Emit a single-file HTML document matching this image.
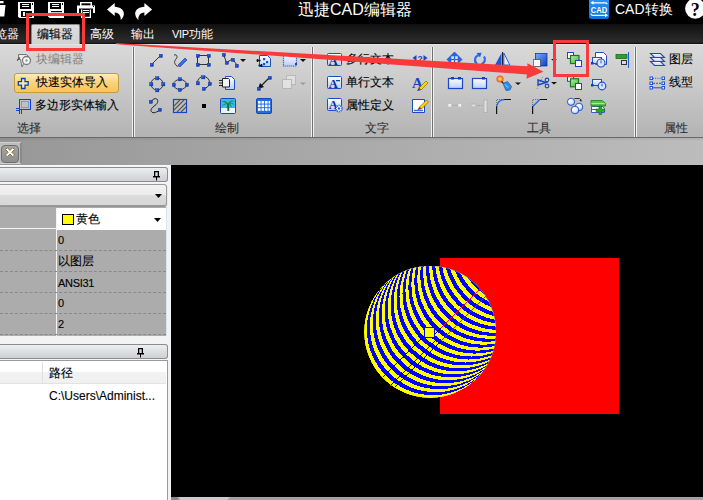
<!DOCTYPE html>
<html><head><meta charset="utf-8">
<style>
*{margin:0;padding:0;box-sizing:border-box}
html,body{width:703px;height:500px;overflow:hidden;background:#000;font-family:"Liberation Sans",sans-serif}
.a{position:absolute}
.t{position:absolute;white-space:nowrap;font-size:12px;line-height:14px}
#title{left:0;top:0;width:703px;height:24px;background:#000}
#tabs{left:0;top:24px;width:703px;height:20px;background:linear-gradient(#101010,#2c2c2c 90%,#0a0a0a)}
#ribbon{left:0;top:44px;width:703px;height:94px;background:linear-gradient(#d9d9d9 0%,#cdcdcd 35%,#b3b3b3 100%);border-top:1px solid #e4e4e4;border-bottom:1px solid #6a6a6a}
.sep{position:absolute;top:47px;width:3px;height:90px;background:linear-gradient(90deg,#f0f0f0 0,#f0f0f0 1px,#707070 1px,#707070 2px,#f0f0f0 2px)}
#strip{left:0;top:138px;width:703px;height:27px;background:linear-gradient(rgba(0,0,0,0.08),rgba(0,0,0,0) 3px),linear-gradient(90deg,#979797 0,#999 30px,#bbbbbb 680px,#bcbcbc 703px)}
#panel{left:0;top:165px;width:171px;height:335px;background:#f3f3f3;border-top:1px solid #fafafa}
#canvas{left:171px;top:165px;width:532px;height:332px;background:#000}
#bottom{left:171px;top:497px;width:532px;height:3px;background:#a2a2a2}
.lbl{color:#2e2e2e;-webkit-text-stroke:0.1px #2e2e2e}
.dk{color:#000;-webkit-text-stroke:0.12px #000}
.hdr{position:absolute;left:0;width:168px;height:15px;border:1px solid #8c8c8c;border-left:none;border-radius:0 3px 3px 0;background:linear-gradient(#eceef0,#cdd0d4)}
</style></head><body>
<div id="title" class="a"></div>
<div id="tabs" class="a"></div>
<div id="ribbon" class="a"></div>
<div class="sep" style="left:132px"></div>
<div class="sep" style="left:311px"></div>
<div class="sep" style="left:431px"></div>
<div class="sep" style="left:634px"></div>
<div id="strip" class="a"></div>
<div id="panel" class="a"></div>
<div id="canvas" class="a"></div>
<div id="bottom" class="a"></div>
<div class="a" style="left:178px;top:497px;width:52px;height:3px;background:#cacaca;clip-path:polygon(0 0,100% 0,95% 100%,5% 100%)"></div>
<div class="a" style="left:171px;top:497px;width:7px;height:3px;background:#8a8a8a"></div>

<!-- strip tab -->
<div class="a" style="left:0;top:142px;width:22px;height:22px;background:#bdbdbd;border:1px solid #cfcfcf;border-left:none;border-right:2px solid #8a8a8a"></div>
<div class="a" style="left:1px;top:145px;width:18px;height:18px;border-radius:4px;background:linear-gradient(#a4a4a4,#8e8e8e);border:1px solid #6e6e6e"></div>

<!-- title text -->
<div class="t" style="left:298px;top:0px;font-size:16px;line-height:20px;color:#fff">迅捷CAD编辑器</div>
<div class="t" style="left:615px;top:1px;font-size:14px;line-height:16px;color:#fff">CAD转换</div>

<!-- tabs -->
<div class="t" style="left:-17px;top:27px;color:#fff">浏览器</div>
<div class="a" style="left:31px;top:24px;width:49px;height:20px;background:linear-gradient(#dedede,#d2d2d2);border:1px solid #8a8a8a;border-bottom:none;border-radius:2px 2px 0 0"></div>
<div class="t dk" style="left:37px;top:27px">编辑器</div>
<div class="t" style="left:90px;top:27px;color:#fff">高级</div>
<div class="t" style="left:131px;top:27px;color:#fff">输出</div>
<div class="t" style="left:172px;top:27px;color:#fff"><span style="font-size:11px;letter-spacing:-0.3px">VIP</span>功能</div>

<!-- ribbon texts -->
<div class="t" style="left:36px;top:52px;color:#7e7e7e">块编辑器</div>
<div class="a" style="left:14px;top:73px;width:105px;height:20px;border:1px solid #c89a40;border-radius:3px;background:linear-gradient(#fdecb4,#f9d27a 50%,#f6c659)"></div>
<div class="t dk" style="left:36px;top:75px">快速实体导入</div>
<div class="t dk" style="left:35px;top:98px">多边形实体输入</div>
<div class="t lbl" style="left:17px;top:121px">选择</div>
<div class="t lbl" style="left:215px;top:121px">绘制</div>
<div class="t dk" style="left:346px;top:52px">多行文本</div>
<div class="t dk" style="left:346px;top:75px">单行文本</div>
<div class="t dk" style="left:346px;top:98px">属性定义</div>
<div class="t lbl" style="left:365px;top:121px">文字</div>
<div class="t lbl" style="left:527px;top:121px">工具</div>
<div class="t dk" style="left:669px;top:52px">图层</div>
<div class="t dk" style="left:669px;top:75px">线型</div>
<div class="t lbl" style="left:664px;top:121px">属性</div>

<!-- panel -->
<div class="hdr" style="top:167px"></div>
<div class="a" style="left:0;top:184px;width:167px;height:22px;border:1px solid #9a9a9a;border-left:none;border-radius:0 3px 3px 0;background:linear-gradient(#f2f2f2 0%,#ececec 50%,#dcdcdc 51%,#d6d6d6);box-shadow:0 1px 1px #888"></div>
<div class="a" style="left:0;top:207px;width:167px;height:129px;background:#acacac;border-right:1px solid #dde3ea"></div>
<div class="a" style="left:57px;top:208px;width:109px;height:22px;background:#fff"></div>
<div class="a" style="left:56px;top:208px;width:1px;height:128px;background:#f4f4f4"></div>
<div class="a" style="left:0;top:228px;width:56px;height:1px;background:#f4f4f4"></div>
<div class="a" style="left:0;top:250px;width:166px;border-top:1px dashed #8a8a8a"></div>
<div class="a" style="left:0;top:271px;width:166px;border-top:1px dashed #8a8a8a"></div>
<div class="a" style="left:0;top:292px;width:166px;border-top:1px dashed #8a8a8a"></div>
<div class="a" style="left:0;top:313px;width:166px;border-top:1px dashed #8a8a8a"></div>
<div class="a" style="left:0;top:334px;width:166px;border-top:1px dashed #8a8a8a"></div>
<div class="a" style="left:62px;top:214px;width:12px;height:11px;background:#ff0;border:1px solid #000"></div>
<div class="t dk" style="left:76px;top:212px">黄色</div>
<div class="t dk" style="left:58px;top:233px;font-size:11px">0</div>
<div class="t dk" style="left:58px;top:254px">以图层</div>
<div class="t dk" style="left:58px;top:276px;font-size:11px;letter-spacing:-0.3px">ANSI31</div>
<div class="t dk" style="left:58px;top:296px;font-size:11px">0</div>
<div class="t dk" style="left:58px;top:317px;font-size:11px">2</div>

<div class="hdr" style="top:344px"></div>
<div class="a" style="left:0;top:360px;width:168px;height:140px;background:#fff;border:1px solid #9a9a9a;border-left:none;border-bottom:none"></div>
<div class="a" style="left:0;top:361px;width:166px;height:23px;background:linear-gradient(#fff 0%,#fff 50%,#f2f2f2 51%,#f0f0f0);border-bottom:1px solid #e2e2e2"></div>
<div class="a" style="left:42px;top:362px;width:1px;height:21px;background:#e0e0e0"></div>
<div class="t dk" style="left:49px;top:366px">路径</div>
<div class="t dk" style="left:49px;top:389px">C:\Users\Administ...</div>

<svg class="a" style="left:0;top:136px" width="171" height="250">
<!-- close X -->
<path d="M5.5 13.5l1.8-1.8 2.7 2.7 2.7-2.7 1.8 1.8-2.7 2.7 2.7 2.7-1.8 1.8-2.7-2.7-2.7 2.7-1.8-1.8 2.7-2.7z" fill="#fff" stroke="#7d6f2a" stroke-width="0.9"/>
<!-- pins -->
<g fill="#000">
<path d="M154 35h5v5h1v1.5h-3v3h-1v-3h-3V40h1zM155.3 36.2v3.8h2.4v-3.8z"/>
<path d="M138 212h5v5h1v1.5h-3v3h-1v-3h-3V217h1zM139.3 213.2v3.8h2.4v-3.8z"/>
<path d="M155 58h7l-3.5 4z"/>
<path d="M154 82h7l-3.5 4z"/>
</g>
</svg>
<div class="a" style="left:440px;top:258px;width:179px;height:156px;background:#f00"></div>
<!--HATCH--><svg class="a" style="left:0;top:0" width="703" height="500" shape-rendering="crispEdges"><defs><clipPath id="cc"><circle cx="430" cy="332" r="66"/></clipPath></defs><g clip-path="url(#cc)"><circle cx="430" cy="332" r="66" fill="#ffff00"/><circle cx="432.83" cy="329.17" r="66" fill="#0000ff"/><circle cx="435.80" cy="326.20" r="66" fill="#ffff00"/><circle cx="438.77" cy="323.23" r="66" fill="#0000ff"/><circle cx="441.74" cy="320.26" r="66" fill="#ffff00"/><circle cx="444.71" cy="317.29" r="66" fill="#0000ff"/><circle cx="447.68" cy="314.32" r="66" fill="#ffff00"/><circle cx="450.65" cy="311.35" r="66" fill="#0000ff"/><circle cx="453.62" cy="308.38" r="66" fill="#ffff00"/><circle cx="456.59" cy="305.41" r="66" fill="#0000ff"/><circle cx="459.56" cy="302.44" r="66" fill="#ffff00"/><circle cx="462.53" cy="299.47" r="66" fill="#0000ff"/><circle cx="465.50" cy="296.50" r="66" fill="#ffff00"/><circle cx="468.47" cy="293.53" r="66" fill="#0000ff"/><circle cx="471.44" cy="290.56" r="66" fill="#ffff00"/><circle cx="474.41" cy="287.59" r="66" fill="#0000ff"/><circle cx="477.38" cy="284.62" r="66" fill="#ffff00"/><circle cx="480.35" cy="281.65" r="66" fill="#0000ff"/><circle cx="483.32" cy="278.68" r="66" fill="#ffff00"/><circle cx="486.29" cy="275.71" r="66" fill="#0000ff"/><circle cx="489.26" cy="272.74" r="66" fill="#ffff00"/><circle cx="492.23" cy="269.77" r="66" fill="#0000ff"/><circle cx="495.20" cy="266.80" r="66" fill="#ffff00"/><circle cx="498.17" cy="263.83" r="66" fill="#0000ff"/><circle cx="501.13" cy="260.87" r="66" fill="#ffff00"/><circle cx="504.10" cy="257.90" r="66" fill="#0000ff"/><circle cx="507.07" cy="254.93" r="66" fill="#ffff00"/><circle cx="510.04" cy="251.96" r="66" fill="#0000ff"/><circle cx="513.01" cy="248.99" r="66" fill="#ffff00"/><circle cx="515.98" cy="246.02" r="66" fill="#0000ff"/><circle cx="518.95" cy="243.05" r="66" fill="#ffff00"/><circle cx="521.92" cy="240.08" r="66" fill="#0000ff"/></g></svg><!--/HATCH-->
<svg class="a" style="left:0;top:0" width="703" height="500" shape-rendering="crispEdges"><g stroke-width="1" fill="none">
<path d="M382.5 377.5L425.5 334.5M390.5 385.5L436.5 339.5M394.5 387.5L440.5 341.5M434.5 334.5L440.5 328.5" stroke="#000"/>
<path d="M440.5 328.5L479.5 289.5M440.5 341.5L486.5 295.5" stroke="#f00"/>
</g><rect x="390" y="385" width="1" height="1" fill="#f00"/><rect x="424" y="327" width="11" height="11" fill="#00f"/><rect x="425" y="328" width="9" height="9" fill="#ff0"/></svg>

<svg class="a" style="left:0;top:0" width="703" height="165">
<defs>
<linearGradient id="bsq" x1="0" y1="0" x2="1" y2="1"><stop offset="0" stop-color="#3c7cff"/><stop offset="1" stop-color="#0028a8"/></linearGradient>
<linearGradient id="lbox" x1="0" y1="0" x2="0" y2="1"><stop offset="0" stop-color="#ffffff"/><stop offset="1" stop-color="#b9cff5"/></linearGradient>
<linearGradient id="grn" x1="0" y1="0" x2="1" y2="1"><stop offset="0" stop-color="#b8f0a8"/><stop offset="1" stop-color="#3fb13a"/></linearGradient>
<linearGradient id="cadg" x1="0" y1="0" x2="0" y2="1"><stop offset="0" stop-color="#2a94f5"/><stop offset="1" stop-color="#1470dc"/></linearGradient>
<rect id="sq" x="0.2" y="0.2" width="3.2" height="3.2" fill="url(#bsq)" stroke="#0a2a90" stroke-width="0.4"/>
</defs>
<!-- title bar icons -->
<path d="M0 1h3.5v2.3H0zM0 5h5.5l-1.2 11.5H0z" fill="#fff"/>
<g fill="#fff">
<path d="M18 2h16v16H19.5L18 16.5z"/>
<path d="M48 2h16v16H49.5L48 16.5z"/>
</g>
<g fill="#000">
<rect x="20" y="3" width="11" height="6"/><rect x="21" y="11" width="11" height="6"/>
<rect x="50" y="3" width="11" height="6"/><rect x="51" y="11" width="11" height="1.2"/>
<rect x="32" y="3" width="1" height="2" /><rect x="62" y="3" width="1" height="2"/>
</g>
<g fill="#fff"><rect x="22" y="4" width="7" height="1"/><rect x="22" y="6" width="7" height="1"/><rect x="23" y="12" width="2" height="4"/>
<rect x="52" y="4" width="7" height="1"/><rect x="52" y="6" width="7" height="1"/><rect x="52" y="13" width="10" height="5"/></g>
<!-- printer -->
<path d="M80 2h12v3.5h3V13h-2V8.5H79V13h-2V5.5h3z" fill="#fff"/>
<rect x="81.5" y="3.3" width="9" height="2" fill="#000"/>
<rect x="93" y="6" width="1" height="1" fill="#000"/>
<path d="M81 9.5h1.3v7.3h7.4V9.5H91V18H81z" fill="#fff"/>
<rect x="83" y="10" width="6" height="1" fill="#fff"/><rect x="83" y="12" width="6" height="1" fill="#fff"/>
<!-- undo redo -->
<path d="M107 9.5L114.7 3v3.8C120 7 124.5 10 123.8 14.5 123.5 17 122 19 120.7 20 121 16.5 119.5 13 114.7 12.6V16z" fill="#fff"/>
<path d="M152.1 9.5L144.4 3v3.8C139.1 7 134.6 10 135.3 14.5 135.6 17 137.1 19 138.4 20 138.1 16.5 139.6 13 144.4 12.6V16z" fill="#fff"/>
<!-- CAD icon -->
<rect x="589" y="-2" width="20" height="21" rx="2.5" fill="url(#cadg)"/>
<text x="599" y="12.8" font-family="Liberation Sans" font-weight="bold" font-size="9.4" fill="#fff" text-anchor="middle" textLength="16.5" lengthAdjust="spacingAndGlyphs">CAD</text>
<path d="M592 2.8h13.5q1.5 0 1.5 1.5" stroke="#fff" stroke-width="1.2" fill="none"/><path d="M590.5 2.8l3-2v4z" fill="#fff"/>
<path d="M591 13.5q0 1.8 1.5 1.8H606" stroke="#fff" stroke-width="1.2" fill="none"/><path d="M608 15.3l-3-2v4z" fill="#fff"/>
<!-- help -->
<circle cx="695.3" cy="8.6" r="10.2" fill="#fff"/>
<text x="695.3" y="15.5" font-family="Liberation Serif" font-weight="bold" font-size="18" fill="#000" text-anchor="middle">?</text>

<!-- group 1 icons -->
<g>
<path d="M18.5 54.5h8l2 2v3l-3 0-3.5 7.5-1.5-7.5h-2z" fill="#ececec" stroke="#6a6a6a" stroke-width="0.9"/>
<path d="M17 60.5l3-3" stroke="#555" stroke-width="1.2"/>
<circle cx="26.5" cy="60.5" r="4" fill="#f6f6f6" stroke="#7a7a7a" stroke-width="1.3"/>
<circle cx="26.5" cy="60.5" r="1.2" fill="#9a9a9a"/>
</g>
<path d="M21.5 78.5h3.5v3.2h3.2v3.5H25v3.3h-3.5v-3.3h-3.2v-3.5h3.2z" fill="#ffe9a8" stroke="#0a3fc0" stroke-width="1.3"/>
<g fill="none" stroke="#0d44d0" stroke-width="1"><rect x="19.5" y="99.5" width="11" height="10"/><rect x="21.5" y="101.5" width="7" height="6" stroke="#6d9cf5"/>
<path d="M16 108.5h4M16 110.5h4M19.5 110v4M21.5 110v4"/></g>

<!-- 绘制 row1 -->
<g stroke="#333" stroke-width="1" fill="none">
<path d="M151.7 64.3L160.5 55.5"/>
<path d="M174 55c3-1 4 2 2 4s-2 5 1 7"/>
<path d="M197.5 55.5h11M197.5 64.5h11M197.5 55.5v9M208.5 55.5v9"/>
<path d="M223.5 54.5l3 8 6-3.5 4.5 6"/>
</g>
<use href="#sq" x="150" y="63"/><use href="#sq" x="159" y="54"/>
<path d="M178 65l7-7 2 2-7 7z" fill="#2f6ff0" stroke="#0c3ea8" stroke-width="0.6"/><path d="M176.5 67.3l1.5-2.2 1.2 1.2z" fill="#e23"/>
<use href="#sq" x="196" y="54"/><use href="#sq" x="207" y="54"/><use href="#sq" x="196" y="63"/><use href="#sq" x="207" y="63"/>
<use href="#sq" x="222" y="53"/><use href="#sq" x="225" y="61"/><use href="#sq" x="231" y="58"/><use href="#sq" x="235" y="64"/>
<path d="M240 59h6l-3 3z" fill="#111"/>
<!-- insert block -->
<path d="M259.5 55.5h8l3 3v8h-11z" fill="url(#lbox)" stroke="#1d4fc0" stroke-width="1"/>
<rect x="263" y="58" width="2.2" height="2.2" fill="#1552e0"/><rect x="266" y="61" width="2.2" height="2.2" fill="#1552e0"/><rect x="263" y="63" width="2.2" height="2.2" fill="#1552e0"/>
<path d="M256.5 60.5h4M257.5 59v3M262.5 65.5h-4M261.5 64v3" stroke="#111" stroke-width="1.3"/>
<!-- dotted rect -->
<path d="M283.5 53.5h10l3 3v9.5h-13z" fill="url(#lbox)" stroke="#1746c8" stroke-width="1.2" stroke-dasharray="1 1"/>
<rect x="282" y="54" width="2" height="2" fill="#1746c8"/><rect x="295" y="63" width="2" height="2" fill="#1746c8"/>
<path d="M300 59h6l-3 3z" fill="#111"/>
<!-- 绘制 row2 -->
<g stroke="#333" stroke-width="1" fill="none">
<circle cx="157" cy="84" r="6"/>
<ellipse cx="180" cy="84.5" rx="6.5" ry="5"/>
<path d="M197.5 82.5a6 6 0 1 1 6 6"/>
</g>
<use href="#sq" x="155.5" y="76.5"/><use href="#sq" x="149.5" y="82.5"/><use href="#sq" x="161.5" y="82.5"/><use href="#sq" x="155.5" y="88.5"/>
<use href="#sq" x="178" y="77.5"/><use href="#sq" x="172" y="83"/><use href="#sq" x="185" y="83"/><use href="#sq" x="178" y="88"/>
<use href="#sq" x="201.5" y="75.5"/><use href="#sq" x="196" y="81.5"/><use href="#sq" x="208" y="82"/><use href="#sq" x="202" y="87"/>
<!-- copy doc -->
<path d="M225.5 76.5h6l3 3v10h-9z" fill="url(#lbox)" stroke="#1d4fc0"/>
<path d="M222.5 78.5h6l1 1v7.5h-7z" fill="#f4f4f4" stroke="#222"/>
<path d="M219 80.5h3.5M219 83h3.5M219 85.5h3.5" stroke="#222"/>
<!-- leader -->
<path d="M269.5 77.5L261 86" stroke="#222" stroke-width="1.3"/><path d="M258 89l2-6 4 4z" fill="#111"/>
<use href="#sq" x="268" y="76"/><use href="#sq" x="257" y="87"/>
<!-- disabled -->
<g opacity="0.55"><rect x="286.5" y="75.5" width="9" height="9" fill="#f0f0f0" stroke="#a9a9a9"/><rect x="282.5" y="79.5" width="9" height="9" fill="#f6f6f6" stroke="#a9a9a9"/></g>
<path d="M300 82.5h6l-3 2.5z" fill="#9a9a9a"/>
<!-- 绘制 row3 -->
<path d="M151.5 101.5C153 97.5 159 97.5 157.5 102.5 156.5 105.5 151 107 151 110.5 151.5 114 156 113 159.5 110" stroke="#222" fill="none" stroke-width="1"/>
<use href="#sq" x="149" y="100"/><use href="#sq" x="158" y="108"/>
<rect x="173.5" y="99.5" width="13" height="13" fill="#bfbfbf" stroke="#1446c8" stroke-width="1.2"/>
<g stroke="#555" stroke-width="1.1"><path d="M174 106l6-6M174 110l10-10M177 112l9-9M181 112l5-5"/></g>
<rect x="202" y="104" width="4" height="4" fill="#000"/>
<rect x="220.5" y="98.5" width="15" height="15" rx="1" fill="#3db7f0" stroke="#1a48b8"/>
<rect x="221" y="108" width="14" height="5" fill="#eaf6ff"/>
<path d="M228.3 111c0-3 .2-5-.6-8" stroke="#0b6a26" stroke-width="1.8" fill="none"/>
<path d="M227.5 103c-1.5-2.5-4.5-2.5-6-1 2-.3 3.5.2 5 1.5-2 0-4 1-4.5 3 1.5-1.5 3.5-2.2 5.5-2.5 0 2-.5 3-1.5 4.5 1.5-1 2.5-2.5 2.5-4.5 1.5 1 2.5 2.5 3 4 .3-2-.5-3.5-2-4.5 2 0 4 .5 5 2-.5-2-2.5-3-4.5-3 1.5-1 3-1.5 5-1-1.5-1.5-4.5-1.5-6 1z" fill="#10903a"/>
<rect x="256.5" y="98.5" width="15" height="15" rx="1.5" fill="#2668e8" stroke="#1746b8"/>
<g fill="#fff"><rect x="258" y="101" width="2.6" height="2.6"/><rect x="261.5" y="101" width="2.6" height="2.6"/><rect x="265" y="101" width="2.6" height="2.6"/><rect x="268.5" y="101" width="1.6" height="2.6"/>
<rect x="258" y="104.6" width="2.6" height="2.6"/><rect x="261.5" y="104.6" width="2.6" height="2.6"/><rect x="265" y="104.6" width="2.6" height="2.6"/><rect x="268.5" y="104.6" width="1.6" height="2.6"/>
<rect x="258" y="108.2" width="2.6" height="2.6"/><rect x="261.5" y="108.2" width="2.6" height="2.6"/><rect x="265" y="108.2" width="2.6" height="2.6"/><rect x="268.5" y="108.2" width="1.6" height="2.6"/></g>

<!-- 文字 icons -->
<g>
<rect x="327.5" y="53.5" width="14" height="12" rx="1" fill="url(#lbox)" stroke="#1a4cc8"/>
<rect x="327.5" y="76.5" width="14" height="12" rx="1" fill="url(#lbox)" stroke="#1a4cc8"/>
<rect x="327.5" y="98.5" width="14" height="12" rx="1" fill="url(#lbox)" stroke="#1a4cc8"/>
<g font-family="Liberation Serif" font-weight="bold" fill="#0b2a9c" font-size="12.5">
<text x="328.8" y="64.5">A</text><text x="328.8" y="87.5">A</text><text x="328.8" y="109">A</text></g>
<rect x="336" y="58" width="4" height="1.3" fill="#1a3fb0"/><rect x="336" y="80" width="4" height="1.3" fill="#1a3fb0"/>
<circle cx="339" cy="108.5" r="3" fill="#fff" stroke="#1f5de0" stroke-width="1.8" stroke-dasharray="1 0.9"/>
<circle cx="339" cy="108.5" r="1.2" fill="#1f5de0"/>
</g>
<path d="M416.5 55l-4 3 4 3zM423.5 55l4 3-4 3z" fill="#1746c8"/>
<text x="420" y="61.5" font-family="Liberation Sans" font-weight="bold" font-size="8.5" fill="#1746c8" text-anchor="middle">?</text>
<text x="412" y="87.5" font-family="Liberation Serif" font-weight="bold" font-size="15" fill="#1746c8">A</text>
<path d="M419 88l7-7 2 2-7 7z" fill="#ffd400" stroke="#6a5a00" stroke-width="0.6"/><path d="M417 91l2-3 2 2z" fill="#202a60"/><path d="M418.5 88.5l1.5 1.5" stroke="#e03020" stroke-width="1"/>
<path d="M412.5 99.5h12v13h-12z" fill="#fff" stroke="#1a48c0"/><path d="M414 110.5h9" stroke="#3c6ee0" stroke-width="1.5"/>
<path d="M419.5 107l7-7 2 2-7 7z" fill="#ffd400" stroke="#6a5a00" stroke-width="0.6"/><path d="M417.5 110l2-3 2 2z" fill="#202a60"/><path d="M419 107.5l1.5 1.5" stroke="#e03020" stroke-width="1"/>

<!-- 工具 row1 -->
<polygon points="447,59.5 454.5,52 462,59.5 454.5,67" fill="#2466e6" stroke="#1040b8" stroke-width="0.6"/>
<g fill="#dfe7f7"><rect x="451.3" y="56.3" width="2.6" height="2.6"/><rect x="455.1" y="56.3" width="2.6" height="2.6"/><rect x="451.3" y="60.1" width="2.6" height="2.6"/><rect x="455.1" y="60.1" width="2.6" height="2.6"/></g>
<path d="M478.5 55.3A4.8 4.8 0 0 0 477 63.8" stroke="#2a6ee8" stroke-width="2.2" fill="none"/>
<polygon points="476.5,53 481.5,52.8 480,57.5" fill="#1f5fd8"/>
<path d="M484 56.5A4.8 4.8 0 0 1 481.5 64" stroke="#2a6ee8" stroke-width="2.2" fill="none"/>
<path d="M501.5 53v12h-6.5z" fill="#1f55d8"/><path d="M503.8 53v12h6z" fill="#e4ecff" stroke="#2050c8" stroke-width="0.9"/><path d="M502.6 52v15" stroke="#111"/>
<linearGradient id="sqg" x1="0" y1="0" x2="1" y2="1"><stop offset="0" stop-color="#7ab0ff"/><stop offset="1" stop-color="#0b3fb8"/></linearGradient>
<rect x="535.5" y="53.5" width="11.5" height="12.5" fill="url(#sqg)" stroke="#0d3aa8" stroke-width="0.8"/>
<rect x="533.5" y="59.5" width="7" height="7" fill="#f4f7ff" stroke="#111" stroke-width="1" stroke-dasharray="1 1"/>
<path d="M551 59h6l-3 2.5z" fill="#111"/>
<!-- green copy -->
<rect x="567.5" y="52.5" width="6" height="6" fill="#fff" stroke="#1a48c0"/>
<rect x="570.5" y="55.5" width="8.5" height="8" fill="url(#grn)" stroke="#1a7a1a" stroke-width="1.2"/>
<rect x="575.5" y="60.5" width="6" height="6" fill="#fff" stroke="#1a48c0"/>
<!-- col3 doc clock -->
<path d="M595.5 52.5h8l3 3v9h-11z" fill="#fff" stroke="#2050c8"/>
<rect x="592.5" y="57.5" width="9" height="6" fill="url(#lbox)" stroke="#2050c8"/>
<rect x="591" y="62" width="2.5" height="2.5" fill="#0d3fb8"/>
<circle cx="601" cy="63" r="4" fill="#d8e6fb" stroke="#2050c8" stroke-width="1.2"/><path d="M601 60.5v2.8" stroke="#2050c8"/>
<!-- green bar -->
<rect x="616" y="54.5" width="11" height="4" fill="#2d9e2d" stroke="#17701a" stroke-width="0.8"/>
<rect x="621.5" y="60.5" width="5" height="4" fill="#d9d9d9" stroke="#333" stroke-width="1"/>
<path d="M628.5 52v16" stroke="#1d5ee8"/>

<!-- 工具 row2 -->
<rect x="448.5" y="78.5" width="14" height="10" fill="url(#lbox)" stroke="#1a48c0" stroke-width="1.2"/>
<rect x="451" y="77" width="3" height="2.5" fill="#0d3fb8"/><rect x="458" y="77" width="3" height="2.5" fill="#0d3fb8"/>
<rect x="472.5" y="78.5" width="14" height="10" fill="url(#lbox)" stroke="#1a48c0" stroke-width="1.2"/>
<rect x="482" y="77" width="3" height="2.5" fill="#0d3fb8"/>
<radialGradient id="flame"><stop offset="0" stop-color="#ffe680"/><stop offset="0.5" stop-color="#ff9a30"/><stop offset="1" stop-color="#e83a10" stop-opacity="0.8"/></radialGradient>
<circle cx="500" cy="79" r="3.6" fill="url(#flame)"/>
<path d="M501.5 81.5c1 1 1.5 2 3 2" stroke="#111" stroke-width="1.1" fill="none"/>
<path d="M503 83.5l4.5-2 4 5-1.5 3.5-4 .5z" fill="#2f8de6" stroke="#1a55a0" stroke-width="0.7"/>
<path d="M505 84.5l3 3" stroke="#d8ecff" stroke-width="0.8"/>
<path d="M515 82.5h6l-3 2.5z" fill="#111"/>
<path d="M537 89l6-13" stroke="#777" stroke-width="0.8" stroke-dasharray="1 1"/>
<path d="M538 80l8 2.5-8 2.5z" fill="none" stroke="#1a48c0" stroke-width="1.4"/>
<circle cx="547" cy="80" r="1.8" fill="none" stroke="#1a48c0" stroke-width="1.2"/><circle cx="547" cy="86" r="1.8" fill="none" stroke="#1a48c0" stroke-width="1.2"/>
<path d="M551 82h6l-3 2.5z" fill="#111"/>
<rect x="567.5" y="76.8" width="6" height="4.5" fill="#fff" stroke="#1a48c0"/>
<rect x="570.5" y="78.8" width="8" height="8" fill="url(#grn)" stroke="#1a7a1a" stroke-width="1.2"/>
<rect x="575.5" y="83.5" width="6" height="6" fill="#fff" stroke="#1a48c0"/>
<rect x="592.5" y="79.5" width="9" height="6" fill="url(#lbox)" stroke="#2050c8"/>
<rect x="591" y="84" width="2.5" height="2.5" fill="#0d3fb8"/>
<circle cx="602" cy="86" r="3.8" fill="#d8e6fb" stroke="#2050c8" stroke-width="1.2"/><path d="M602 83.8v2.5" stroke="#2050c8"/>

<!-- 工具 row3 -->
<g fill="#f2f2f2" stroke="#b8b8b8" stroke-width="0.6"><rect x="448" y="103.5" width="3.5" height="3.5"/><rect x="458" y="103.5" width="3.5" height="3.5"/></g>
<path d="M452.5 105.3h5" stroke="#9a9a9a" stroke-dasharray="1 1"/>
<rect x="471" y="104" width="5" height="3" fill="#d9d9d9" stroke="#aaa" stroke-width="0.6"/><path d="M477 105.5h6" stroke="#9a9a9a" stroke-dasharray="1 1"/>
<rect x="484" y="100" width="3" height="12.5" fill="#e2e2e2" stroke="#a6a6a6" stroke-width="0.7"/>
<g stroke="#111" stroke-width="1.2" fill="none"><path d="M496.6 106v8M504 99.5h7"/><path d="M532.6 106v8M540 99.5h7"/></g>
<g stroke="#555" stroke-width="0.8" stroke-dasharray="1 1" fill="none"><path d="M496.6 105V99.5h7"/><path d="M532.6 105V99.5h7"/></g>
<path d="M496.8 106.5q1-6.5 7.5-7" stroke="#1f6be8" stroke-width="1.3" fill="none"/>
<path d="M532.8 106.5l7-7" stroke="#1f6be8" stroke-width="1.3" fill="none"/>
<radialGradient id="sph" cx="0.4" cy="0.35" r="0.7"><stop offset="0" stop-color="#ffffff"/><stop offset="0.6" stop-color="#dce8fb"/><stop offset="1" stop-color="#7fa6ea"/></radialGradient><g fill="url(#sph)" stroke="#1c4fc8" stroke-width="0.9"><circle cx="571" cy="101.8" r="3.6"/><circle cx="579" cy="107" r="3.8"/><circle cx="575" cy="110" r="3.8"/></g>
<path d="M574.5 98.5h5l1.5 1.5" stroke="#222" fill="none" stroke-width="0.9"/><path d="M582 101.5l-2.5-.5 1.5-2z" fill="#222"/>
<path d="M591.5 106.5h11l2 2v4h-13z" fill="#fff" stroke="#2050c8" stroke-width="0.9"/>
<path d="M591.5 109.5h7" stroke="#2050c8" stroke-width="0.9"/>
<path d="M591 100.5h11l3.5 3v2.5h-14.5z" fill="#5cc24a" stroke="#1b7a1b" stroke-width="0.8"/>
<path d="M591.3 103.5h13.5" stroke="#bff0b0" stroke-width="0.8"/>
<path d="M599 106h2.6v3h3v2.6h-3v3H599v-3h-3V109h3z" fill="#22aa22" stroke="#0f6e0f" stroke-width="0.6"/>
<!-- 属性 icons -->
<g fill="url(#lbox)" stroke="#1a48c8" stroke-width="1.1">
<path d="M650.5 61.5h10l4 4h-10z"/>
<path d="M650.5 57.5h10l4 4h-10z"/>
<path d="M650.5 53.5h10l4 4h-10z"/>
</g>
<g fill="#fff" stroke="#1a52d8" stroke-width="1"><rect x="650" y="77" width="2.5" height="2.5"/><rect x="662" y="77" width="2.5" height="2.5"/><rect x="650" y="82" width="2.5" height="2.5"/><rect x="662" y="82" width="2.5" height="2.5"/><rect x="650" y="86.5" width="2.5" height="2.5"/><rect x="662" y="86.5" width="2.5" height="2.5"/></g>
<path d="M653 78.3h9" stroke="#1a52d8" stroke-width="1" stroke-dasharray="1 1.2"/><path d="M653 87.8h9" stroke="#1a52d8" stroke-width="1"/><path d="M653 83.3h9" stroke="#1a52d8" stroke-width="1" stroke-dasharray="2 1"/>
</svg>

<!-- annotations -->
<svg class="a" style="left:0;top:0" width="703" height="500">
<rect x="27.5" y="14.5" width="56" height="35" fill="none" stroke="#f93a3a" stroke-width="3"/>
<rect x="554.5" y="41.5" width="33" height="34" fill="none" stroke="#f93a3a" stroke-width="3"/>
<polygon points="116,43 527.4,66.3 527.4,63.2 543.4,71.7 526.3,78.8 527,74.5 116,44.2" fill="#f93a3a"/>
</svg>
</body></html>
